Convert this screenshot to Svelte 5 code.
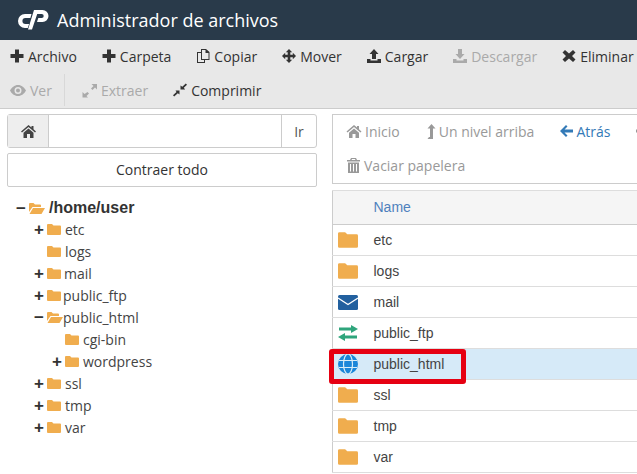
<script>
	const tools = [
		{ icon: "plus", label: "Archivo" },
		{ icon: "plus", label: "Carpeta" },
		{ icon: "copy", label: "Copiar" },
		{ icon: "move", label: "Mover" },
		{ icon: "upload", label: "Cargar" },
		{ icon: "download", label: "Descargar", off: true },
		{ icon: "cross", label: "Eliminar" },
	];

	// name, depth, expander sign, gap before the label
	const tree = [
		["etc", 1, "+", 4],
		["logs", 1, "", 4],
		["mail", 1, "+", 3],
		["public_ftp", 1, "+", 2],
		["public_html", 1, "-", 0],
		["cgi-bin", 2, "", 4],
		["wordpress", 2, "+", 4],
		["ssl", 1, "+", 4],
		["tmp", 1, "+", 4],
		["var", 1, "+", 4],
	];

	const rows = [
		["etc", "folder"],
		["logs", "folder"],
		["mail", "mail"],
		["public_ftp", "ftp"],
		["public_html", "globe"],
		["ssl", "folder"],
		["tmp", "folder"],
		["var", "folder"],
	];
</script>

{#snippet folder(w, h)}
	<svg class="ico" width={w} height={h} viewBox="0 0 14 11">
		<path d="M1 0h4l1.500 1.500H13a1 1 0 0 1 1 1V10a1 1 0 0 1-1 1H1a1 1 0 0 1-1-1V1a1 1 0 0 1 1-1z" fill="#f0ad4e" />
	</svg>
{/snippet}

{#snippet openFolder()}
	<svg class="ico" width="16" height="11" viewBox="0 0 16 11">
		<path d="M0 1a1 1 0 0 1 1-1h3.500L6 1.500h5a1 1 0 0 1 1 1V4H3.500L0 9z" fill="#f0ad4e" />
		<path d="M4 5h12l-3.500 6H.5z" fill="#f0ad4e" />
	</svg>
{/snippet}

{#snippet toolIcon(name)}
	<svg class="ico" width="14" height="14" viewBox="0 0 14 14" fill="currentColor">
		{#if name === "plus"}
			<path d="M5 .5h4V5h4.500v4H9v4.500H5V9H.5V5H5z" />
		{:else if name === "copy"}
			<path fill-rule="evenodd" d="M5 0h5l3.500 3v8H9v3H1V3h4zm1 1v9h6.500V4H9.500V1zM2 4v9h6v-2H5V4z" />
		{:else if name === "move"}
			<path d="M7 0l3.200 3.200H8.300v2.500h2.500V3.800L14 7l-3.200 3.200V8.300H8.300v2.500h1.900L7 14l-3.200-3.200h1.900V8.300H3.200v1.900L0 7l3.200-3.200v1.900h2.500V3.200H3.800z" />
		{:else if name === "upload"}
			<path d="M7 0l4.500 5H9v5H5V5H2.500zM0 10h3.500v1.500h7V10H14v4H0z" />
		{:else if name === "download"}
			<path d="M5 0h4v5h2.500L7 10 2.500 5H5zM0 10h3.500v1.500h7V10H14v4H0z" />
		{:else if name === "cross"}
			<path d="M3 1l4 3.500L11 1l2.500 2.500L10 7l3.500 3.500L11 13 7 9.500 3 13 .5 10.500 4 7 .5 3.500z" />
		{/if}
	</svg>
{/snippet}

<div class="page">
	<header>
		<svg class="logo" width="31" height="20" viewBox="0 0 31 20" fill="#fff">
			<path d="M13.500 4H7a7 7 0 0 0 0 14h2.800l1.300-4H7.400a3 3 0 0 1 0-6h5z" />
			<path d="M16 0h8.500a6 6 0 0 1 0 12H19l1.300-4h3.400a2 2 0 0 0 0-4h-4.500L14 19.500H10z" />
		</svg>
		<h1>Administrador de archivos</h1>
	</header>

	<div class="toolbar">
		<div class="tools">
			{#each tools as t}
				<span class="tool" class:off={t.off}>{@render toolIcon(t.icon)}{t.label}</span>
			{/each}
		</div>
		<div class="tools second">
			<span class="tool off ver">
				<svg class="ico" width="16" height="11" viewBox="0 0 16 11" fill="currentColor">
					<path fill-rule="evenodd" d="M8 0c3.500 0 6.500 2.500 8 5.500C14.500 8.500 11.500 11 8 11S1.500 8.500 0 5.500C1.500 2.500 4.500 0 8 0zm0 2a3.500 3.500 0 1 0 0 7 3.500 3.500 0 0 0 0-7z" />
					<circle cx="8" cy="5.500" r="2" />
				</svg>Ver
			</span>
			<span class="tool off extraer">
				<svg class="ico" width="15" height="15" viewBox="0 0 15 15" fill="currentColor">
					<path d="M9.500 1H15v5.500l-2-2L10.500 7 9 5.500 11.500 3zM5.500 9L7 10.500 4.500 13l1.500 1.500H.5V9l2 2z" />
				</svg>Extraer
			</span>
			<span class="tool">
				<svg class="ico" width="14" height="14" viewBox="0 0 14 14" fill="currentColor">
					<path d="M12.800.5l1.200 1.200-3.200 3 1.300 1.800H7.500V2.500l1.800 1.300zM2.500 7.500h4v4L4.800 10.200 1.200 13.500 0 12.300l3.500-3.300z" />
				</svg>Comprimir
			</span>
		</div>
	</div>

	<div class="main">
		<aside>
			<div class="path">
				<span class="home">
					<svg width="15" height="13" viewBox="0 0 15 13" fill="#444"><path d="M7.500 0l3 2.500V1h2v3.200L15 6.500l-1 1-6.500-5.500L1 7.500l-1-1zM2.500 7.800l5-4.200 5 4.200V13H9V9H6v4H2.500z" /></svg>
				</span>
				<span class="field"></span>
				<span class="go">Ir</span>
			</div>
			<div class="collapse">Contraer todo</div>

			<div class="tree">
				<div class="node root">
					<span class="sign">−</span>{@render openFolder()}<b>/home/user</b>
				</div>
				{#each tree as [name, depth, sign, gap]}
					<div class="node" class:deep={depth === 2}>
						<span class="sign">{sign === "-" ? "−" : sign}</span>
						{#if name === "public_html"}{@render openFolder()}{:else}{@render folder(14, 11)}{/if}
						<span style="margin-left: {gap}px">{name}</span>
					</div>
				{/each}
			</div>
		</aside>

		<section>
			<div class="nav">
				<div class="navline">
					<span class="link">
						<svg class="ico" width="16" height="13" viewBox="0 0 15 13" fill="currentColor"><path d="M7.500 0l3 2.500V1h2v3.200L15 6.500l-1 1-6.500-5.500L1 7.500l-1-1zM2.500 7.800l5-4.200 5 4.200V13H9V9H6v4H2.500z" /></svg>Inicio
					</span>
					<span class="link">
						<svg class="ico" width="10" height="15" viewBox="0 0 10 15" fill="currentColor"><path d="M5.500 0L9.500 4.500H7V15H1.500l1.500-2h1V4.500H1.500z" /></svg>Un nivel arriba
					</span>
					<span class="link blue">
						<svg class="ico" width="13" height="12" viewBox="0 0 13 12" fill="currentColor"><path d="M6 0l1.500 1.500L4.500 4.500H13v3H4.500l3 3L6 12 0 6z" /></svg>Atrás
					</span>
					<span class="link">
						<svg class="ico" width="13" height="12" viewBox="0 0 13 12" fill="currentColor"><path d="M7 0l6 6-6 6-1.500-1.500 3-3H0v-3h8.500l-3-3z" /></svg>
					</span>
				</div>
				<div class="navline trash">
					<span class="link">
						<svg class="ico" width="13" height="15" viewBox="0 0 13 15" fill="currentColor"><path fill-rule="evenodd" d="M4 0h5l1 2h3v1.500H0V2h3zm1 1l-.5 1h4L8 1zM1 4.500h11V15H1zM3 6v7.500h1V6zm3 0v7.500h1V6zm3 0v7.500h1V6z" /></svg>Vaciar papelera
					</span>
				</div>
			</div>

			<table>
				<thead>
					<tr><th class="icocol"></th><th>Name</th></tr>
				</thead>
				<tbody>
					{#each rows as [name, kind]}
						<tr class:selected={name === "public_html"}>
							<td class="icocol">
								{#if kind === "folder"}
									{@render folder(20, 16)}
								{:else if kind === "mail"}
									<svg class="ico" width="20" height="15" viewBox="0 0 20 15"><rect width="20" height="15" rx="1.500" fill="#22609f" /><path d="M0 3l10 6.500L20 3" fill="none" stroke="#fff" stroke-width="1.300" /></svg>
								{:else if kind === "ftp"}
									<svg class="ico" width="20" height="16" viewBox="0 0 20 16" fill="#2fa57c"><path d="M13 0l7 4-7 4V5.500H1v-3h12zM7 8v2.500h12v3H7V16l-7-4z" /></svg>
								{:else}
									<svg class="ico" width="20" height="20" viewBox="0 0 20 20" fill="none" stroke="#d9edf7" stroke-width="1.200"><circle cx="10" cy="10" r="10" fill="#1a86d9" stroke="none" /><ellipse cx="10" cy="10" rx="4.500" ry="10" /><path d="M1 6.500h18M1 13.500h18" /></svg>
								{/if}
							</td>
							<td class="name">{#if name === "public_html"}<span class="mark"></span>{/if}{name}</td>
						</tr>
					{/each}
				</tbody>
			</table>
		</section>
	</div>
</div>

<style>
	:global(body) {
		margin: 0;
		overflow: hidden;
		background: #fff;
	}

	.page {
		width: 637px;
		height: 474px;
		overflow: hidden;
		font-family: "Open Sans", sans-serif;
		font-size: 14px;
		color: #333;
	}

	header {
		height: 40px;
		background: #293a4a;
		display: flex;
		align-items: center;
		padding-left: 18px;
		gap: 8px;
	}

	h1 {
		margin: 0;
		font-size: 18px;
		font-weight: 400;
		color: #fff;
	}

	.logo {
		flex: none;
	}

	.toolbar {
		background: #e8e8e8;
		border-bottom: 1px solid #ccc;
		padding-left: 10px;
		box-sizing: border-box;
		height: 69px;
	}

	.tools {
		display: flex;
		height: 34px;
		box-sizing: border-box;
		padding-bottom: 2px;
		align-items: center;
		gap: 25px;
		white-space: nowrap;
	}

	.second {
		gap: 17px;
	}

	.tool {
		display: inline-flex;
		align-items: center;
		gap: 4px;
		color: #333;
	}

	.tool.off {
		color: #aaa;
	}

	.ver {
		padding-right: 12px;
		border-right: 1px solid #d8d8d8;
		height: 32px;
	}

	.extraer {
		margin-right: 8px;
	}

	.ico {
		flex: none;
	}

	.main {
		display: grid;
		grid-template-columns: 332px 1fr;
	}

	aside {
		padding: 5px 15px 0 7px;
		min-width: 0;
	}

	.path {
		display: flex;
		height: 34px;
		box-sizing: border-box;
		border: 1px solid #ccc;
		border-radius: 3px;
	}

	.home {
		width: 40px;
		background: #eee;
		border-right: 1px solid #ccc;
		display: flex;
		align-items: center;
		justify-content: center;
	}

	.field {
		flex: 1;
	}

	.go {
		width: 34px;
		border-left: 1px solid #ccc;
		display: flex;
		align-items: center;
		justify-content: center;
		color: #555;
	}

	.collapse {
		margin-top: 5px;
		height: 34px;
		box-sizing: border-box;
		padding-bottom: 2px;
		border: 1px solid #ccc;
		border-radius: 2px;
		display: flex;
		align-items: center;
		justify-content: center;
		color: #333;
	}

	.tree {
		margin-top: 10px;
		padding-left: 9px;
		color: #444;
	}

	.node {
		display: flex;
		align-items: center;
		height: 22px;
		padding-left: 18px;
		white-space: nowrap;
	}

	.node.root {
		height: 21px;
		box-sizing: border-box;
		padding: 1px 0 0;
		font-family: "Liberation Sans", sans-serif;
		font-size: 16px;
		color: #333;
	}

	.node.deep {
		padding-left: 36px;
	}

	.sign {
		width: 11px;
		margin-right: 2px;
		font-weight: 700;
		font-size: 17px;
		line-height: 1;
		color: #333;
		font-family: "Liberation Sans", sans-serif;
	}

	.root b {
		margin-left: 4px;
	}

	section {
		min-width: 0;
		width: 340px;
	}

	.nav {
		margin-top: 5px;
		border: 1px solid #ccc;
		border-right: 0;
		height: 70px;
		box-sizing: border-box;
		padding: 0 13px;
	}

	.navline {
		display: flex;
		height: 34px;
		box-sizing: border-box;
		padding-bottom: 2px;
		align-items: center;
		gap: 26px;
		white-space: nowrap;
	}

	.trash {
		height: 32px;
		padding-bottom: 0;
		padding-left: 1px;
	}

	.trash .link {
		gap: 4px;
	}

	.link {
		display: inline-flex;
		align-items: center;
		gap: 3px;
		color: #999;
	}

	.blue {
		color: #337ab7;
	}

	table {
		margin-top: 6px;
		width: 100%;
		border-collapse: collapse;
		border-left: 1px solid #ccc;
		font-family: "Liberation Sans", sans-serif;
		font-size: 14px;
	}

	th {
		height: 34px;
		background: #f5f5f5;
		border-bottom: 1px solid #ccc;
		border-top: 1px solid #ddd;
		text-align: left;
		font-weight: 400;
		color: #4f81bd;
		padding: 0 0 2px 0;
		box-sizing: border-box;
	}

	td {
		height: 30px;
		border-bottom: 1px solid #ddd;
		padding: 0;
		color: #444;
	}

	.icocol {
		width: 41px;
		text-align: left;
		padding-left: 5px;
		box-sizing: border-box;
	}

	.icocol svg {
		display: block;
	}

	.selected td {
		background: #d6eaf8;
	}

	.name {
		position: relative;
	}

	.mark {
		position: absolute;
		left: -45px;
		top: 0;
		width: 137px;
		height: 35px;
		box-sizing: border-box;
		border: 5px solid #e60012;
		border-radius: 3px;
	}
</style>
